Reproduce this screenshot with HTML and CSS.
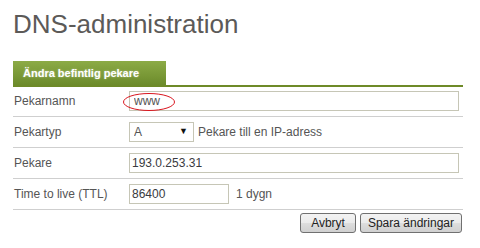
FILE: index.html
```html
<!DOCTYPE html>
<html lang="sv">
<head>
    <meta charset="UTF-8">
    <title>DNS-administration</title>
    <link rel="stylesheet" href="styles.css">
</head>
<body>
    <div class="page">
        <h1>DNS-administration</h1>
        <div class="tabs">
            <div class="tab">Ändra befintlig pekare</div>
        </div>
        <form class="form">
            <div class="row first">
                <label for="name">Pekarnamn</label>
                <div class="field">
                    <span class="marked">
                        <input type="text" id="name" class="wide" value="www">
                        <svg class="ring" width="54" height="20" viewBox="0 0 54 20">
                            <ellipse cx="27" cy="10" rx="25.5" ry="8.5" fill="none" stroke="#d9161f" stroke-width="1"/>
                        </svg>
                    </span>
                </div>
            </div>
            <div class="row">
                <label for="type">Pekartyp</label>
                <div class="field">
                    <span class="select">
                        <select id="type">
                            <option>A</option>
                            <option>AAAA</option>
                            <option>CNAME</option>
                            <option>MX</option>
                        </select>
                    </span>
                    <span class="hint">Pekare till en IP-adress</span>
                </div>
            </div>
            <div class="row">
                <label for="target">Pekare</label>
                <div class="field">
                    <input type="text" id="target" class="wide dark" value="193.0.253.31">
                </div>
            </div>
            <div class="row">
                <label for="ttl">Time to live (TTL)</label>
                <div class="field">
                    <input type="text" id="ttl" class="short dark" value="86400">
                    <span class="hint ttl-hint">1 dygn</span>
                </div>
            </div>
            <div class="buttons">
                <button type="button" class="cancel">Avbryt</button>
                <button type="button">Spara ändringar</button>
            </div>
        </form>
    </div>
</body>
</html>
```

FILE: styles.css
```css
body {
    margin: 0;
    font-family: "Liberation Sans", Arial, sans-serif;
    background: #fff;
    color: #555;
}
.page {
    width: 450px;
    padding-left: 13px;
}
h1 {
    margin: 9px 0 0;
    font-size: 26px;
    line-height: 30px;
    font-weight: normal;
    color: #5c5a58;
}
.tabs {
    margin-top: 22px;
    border-bottom: 2px solid #6e8a28;
}
.tab {
    width: 143px;
    height: 24px;
    line-height: 25px;
    padding-left: 10px;
    font-size: 11px;
    font-weight: bold;
    color: #fff;
    text-shadow: 0 0 2px rgba(255, 255, 255, 0.5);
    background: linear-gradient(#8cab46, #6c8b2b);
}
.row {
    display: grid;
    grid-template-columns: 116px 1fr;
    align-items: center;
    padding: 5px 0;
    border-bottom: 1px solid #cfcfcf;
}
.row.first {
    padding-top: 4px;
}
label {
    padding-left: 1px;
    font-size: 12px;
}
.field {
    display: flex;
    align-items: center;
    height: 20px;
}
input {
    box-sizing: border-box;
    height: 20px;
    padding: 0 4px;
    border: 1px solid #c6c6b6;
    font-family: "Liberation Sans", Arial, sans-serif;
    font-size: 12px;
    color: #555;
}
input.dark {
    color: #3a3a40;
    padding-left: 2px;
}
.wide {
    width: 330px;
}
.short {
    width: 100px;
}
.marked {
    position: relative;
    display: block;
}
.ring {
    position: absolute;
    left: -7px;
    top: 1px;
}
.select {
    position: relative;
    display: block;
    width: 65px;
    height: 20px;
}
.select select {
    box-sizing: border-box;
    width: 65px;
    height: 20px;
    padding: 0 4px;
    border: 1px solid #c6c6b6;
    border-radius: 0;
    background: #fff;
    font-family: "Liberation Sans", Arial, sans-serif;
    font-size: 12px;
    color: #555;
    appearance: none;
    -webkit-appearance: none;
}
.select::after {
    content: "\25BC";
    position: absolute;
    right: 6px;
    top: 4px;
    font-size: 9px;
    color: #111;
    pointer-events: none;
}
.hint {
    margin-left: 4px;
    font-size: 12px;
}
.ttl-hint {
    margin-left: 7px;
}
.buttons {
    display: flex;
    justify-content: flex-end;
    gap: 4px;
    margin-top: 3px;
    padding-right: 1px;
}
button {
    height: 20px;
    padding: 0 7px;
    border: 1px solid #707070;
    border-radius: 3px;
    background: linear-gradient(#f3f3f3, #ebebeb 50%, #dedede 51%, #d0d0d0);
    font-family: "Liberation Sans", Arial, sans-serif;
    font-size: 12px;
    color: #222;
}
button.cancel {
    padding: 0 10px;
}
```
